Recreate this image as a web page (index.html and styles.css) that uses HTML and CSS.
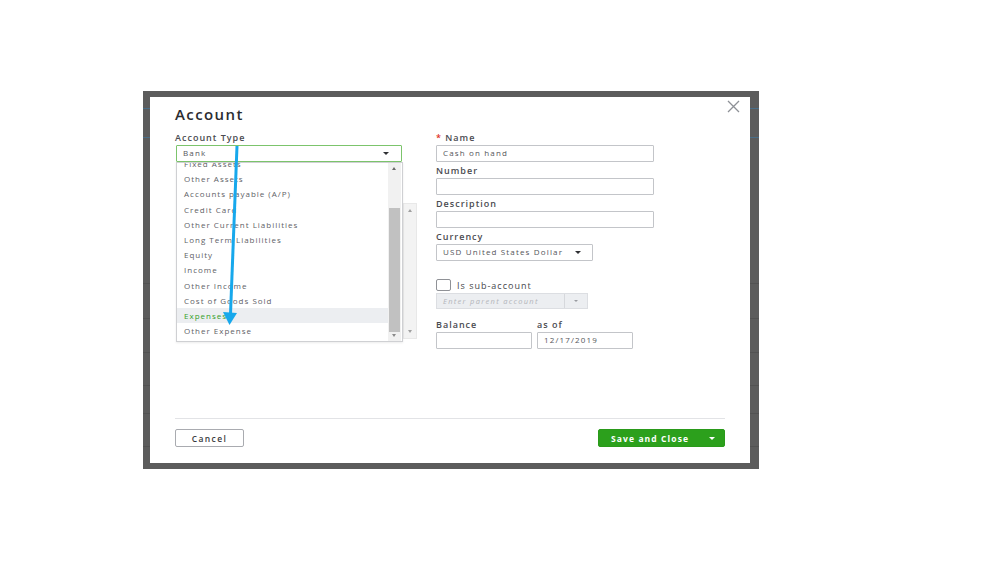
FILE: index.html
```html
<!DOCTYPE html>
<html lang="en">
<head>
<meta charset="utf-8">
<title>Account</title>
<link rel="stylesheet" href="styles.css">
</head>
<body>
<div class="frame">
  <div class="modal">
    <button class="close" aria-label="Close">
      <svg width="13" height="13" viewBox="0 0 13 13"><path d="M1 1L12 12M12 1L1 12" stroke="#8d9096" stroke-width="1.3" fill="none"/></svg>
    </button>
    <h1 class="title">Account</h1>
    <div class="cols">
      <div class="col-left">
        <div class="lbl">Account Type</div>
        <div class="select-wrap">
          <div class="select active"><span>Bank</span><span class="caret"></span></div>
          <div class="ghost-scroll"><span class="sb-up"></span><span class="sb-down"></span></div>
          <div class="menu">
            <ul class="items">
              <li>Fixed Assets</li>
              <li>Other Assets</li>
              <li>Accounts payable (A/P)</li>
              <li>Credit Card</li>
              <li>Other Current Liabilities</li>
              <li>Long Term Liabilities</li>
              <li>Equity</li>
              <li>Income</li>
              <li>Other Income</li>
              <li>Cost of Goods Sold</li>
              <li class="hl">Expenses</li>
              <li>Other Expense</li>
            </ul>
            <div class="scrollbar"><span class="sb-up"></span><span class="thumb"></span><span class="sb-down"></span></div>
          </div>
        </div>
      </div>
      <div class="col-right">
        <div class="lbl"><span class="req">*</span> Name</div>
        <div class="input">Cash on hand</div>
        <div class="lbl">Number</div>
        <div class="input"></div>
        <div class="lbl">Description</div>
        <div class="input"></div>
        <div class="lbl">Currency</div>
        <div class="select currency"><span>USD United States Dollar</span><span class="caret"></span></div>
        <div class="check-row"><span class="checkbox"></span><span>Is sub-account</span></div>
        <div class="parent"><span class="ph">Enter parent account</span><span class="parent-btn"><span class="caret light"></span></span></div>
        <div class="bal-row">
          <div class="bal-col">
            <div class="lbl">Balance</div>
            <div class="input small"></div>
          </div>
          <div class="bal-col">
            <div class="lbl">as of</div>
            <div class="input small">12/17/2019</div>
          </div>
        </div>
      </div>
    </div>
    <div class="footer">
      <button class="btn-cancel">Cancel</button>
      <button class="btn-save"><span class="save-text">Save and Close</span><span class="caret white"></span></button>
    </div>
  </div>
</div>
<svg class="annot" width="999" height="562" viewBox="0 0 999 562">
  <line x1="237" y1="146" x2="230.5" y2="314" stroke="#17a8ec" stroke-width="3"/>
  <polygon points="223,312 237,313 229.5,325" fill="#17a8ec"/>
</svg>
</body>
</html>
```

FILE: styles.css
```css
html, body {
  margin: 0;
  background: #ffffff;
}
body {
  position: relative;
  font-family: "Open Sans", "Liberation Sans", sans-serif;
  color: #393a3d;
  width: 999px;
  height: 562px;
  overflow: hidden;
}
.frame {
  margin: 91px 0 0 143px;
  width: 616px;
  height: 378px;
  box-sizing: border-box;
  padding: 6px 9px 6px 7px;
  background:
    linear-gradient(#4a6e88, #4a6e88) 0 17px / 100% 1px no-repeat,
    linear-gradient(#4a6e88, #4a6e88) 0 46px / 100% 1px no-repeat,
    linear-gradient(#525252, #525252) 0 192px / 100% 1px no-repeat,
    linear-gradient(#525252, #525252) 0 227px / 100% 1px no-repeat,
    linear-gradient(#525252, #525252) 0 261px / 100% 1px no-repeat,
    linear-gradient(#525252, #525252) 0 294px / 100% 1px no-repeat,
    linear-gradient(#525252, #525252) 0 322px / 100% 1px no-repeat,
    linear-gradient(#525252, #525252) 0 355px / 100% 1px no-repeat,
    #5c5c5c;
}
.modal {
  position: relative;
  width: 600px;
  height: 366px;
  box-sizing: border-box;
  background: #fff;
  padding: 8px 25px 0 25px;
  display: flex;
  flex-direction: column;
}
.close {
  position: absolute;
  top: 3px;
  right: 10px;
  width: 13px;
  height: 13px;
  padding: 0;
  border: 0;
  background: none;
  display: flex;
}
.title {
  margin: 0 0 9px 0;
  font-size: 15px;
  line-height: 18px;
  font-weight: 600;
  color: #2b2c30;
  letter-spacing: 1.4px;
}
.cols {
  display: flex;
  gap: 34px;
}
.col-left {
  width: 227px;
}
.col-right {
  width: 218px;
  display: flex;
  flex-direction: column;
  align-items: flex-start;
}
.lbl {
  font-size: 9px;
  line-height: 12px;
  font-weight: 600;
  color: #4a4b50;
  margin-bottom: 1px;
  letter-spacing: 1px;
}
.req {
  color: #e0301e;
}
.input, .select {
  box-sizing: border-box;
  height: 17px;
  border: 1px solid #c3c5c9;
  border-radius: 1px;
  background: #fff;
  font-size: 8px;
  line-height: 13px;
  padding: 0 6px 2px;
  color: #54555a;
  letter-spacing: 1.15px;
  white-space: nowrap;
}
.col-right > .input {
  width: 218px;
  margin-bottom: 3px;
}
.select {
  display: flex;
  align-items: center;
  justify-content: space-between;
}
.select .caret {
  margin-top: 2px;
}
.select.active {
  margin-left: 1px;
  width: 226px;
  border-color: #7cc46c;
  padding-right: 12px;
}
.select.currency {
  width: 157px;
  padding-right: 11px;
}
.caret {
  width: 0;
  height: 0;
  border-left: 3px solid transparent;
  border-right: 3px solid transparent;
  border-top: 3px solid #2f3034;
}
.caret.light {
  border-top-color: #9a9ca1;
  border-left-width: 2.5px;
  border-right-width: 2.5px;
  border-top-width: 2.5px;
}
.caret.white {
  border-top-color: #fff;
}
.select-wrap {
  position: relative;
}
.menu {
  position: absolute;
  top: 17px;
  left: 1px;
  width: 227px;
  height: 180px;
  box-sizing: border-box;
  border: 1px solid #cfd0d3;
  background: #fff;
  overflow: hidden;
  box-shadow: 0 1px 2px rgba(0,0,0,0.08);
  z-index: 2;
}
.items {
  list-style: none;
  margin: -7px 0 0 0;
  padding: 0;
  width: 211px;
}
.items li {
  height: 15.2px;
  line-height: 15.2px;
  padding-left: 7px;
  font-size: 8px;
  color: #606166;
  letter-spacing: 1px;
  white-space: nowrap;
}
.items li.hl {
  background: #eceef1;
  color: #35a02a;
}
.scrollbar {
  position: absolute;
  top: 0;
  right: 1px;
  bottom: 0;
  width: 13px;
  background: #f1f1f1;
}
.thumb {
  position: absolute;
  left: 1px;
  right: 1px;
  top: 45px;
  height: 124px;
  background: #c1c1c1;
}
.sb-up, .sb-down {
  position: absolute;
  left: 50%;
  margin-left: -2.5px;
  width: 0;
  height: 0;
  border-left: 2.5px solid transparent;
  border-right: 2.5px solid transparent;
}
.sb-up {
  top: 4px;
  border-bottom: 3px solid #6a6a6a;
}
.sb-down {
  bottom: 4px;
  border-top: 3px solid #8a8a8a;
}
.ghost-scroll {
  position: absolute;
  left: 228px;
  top: 58px;
  width: 14px;
  height: 136px;
  box-sizing: border-box;
  background: #f3f3f3;
  border: 1px solid #e8e8e8;
  z-index: 1;
}
.ghost-scroll .sb-up { border-bottom-color: #a0a0a0; top: 5px; }
.ghost-scroll .sb-down { border-top-color: #a0a0a0; bottom: 5px; }
.check-row {
  margin-top: 18px;
  height: 12px;
  display: flex;
  align-items: center;
  gap: 6px;
  font-size: 9px;
  line-height: 11px;
  color: #45464b;
  letter-spacing: 1px;
}
.checkbox {
  width: 15px;
  height: 12px;
  box-sizing: border-box;
  border: 1px solid #8f9196;
  border-radius: 2px;
  background: #fff;
}
.parent {
  margin-top: 2px;
  width: 152px;
  height: 16px;
  box-sizing: border-box;
  border: 1px solid #dcdee2;
  background: #eceef1;
  display: flex;
  align-items: center;
}
.ph {
  flex: 1;
  padding-left: 6px;
  font-size: 7.5px;
  line-height: 12px;
  padding-bottom: 1px;
  font-style: italic;
  color: #b3b5ba;
  letter-spacing: 1.3px;
  white-space: nowrap;
  overflow: hidden;
}
.parent-btn {
  width: 22px;
  height: 100%;
  border-left: 1px solid #d6d8dc;
  display: flex;
  align-items: center;
  justify-content: center;
}
.bal-row {
  margin-top: 10px;
  display: flex;
  gap: 5px;
}
.input.small {
  width: 96px;
  padding-left: 6px;
}
.footer {
  margin-top: auto;
  border-top: 1px solid #e2e3e6;
  padding: 10px 0 16px;
  display: flex;
  justify-content: space-between;
  align-items: center;
}
.btn-cancel, .btn-save {
  font-family: "Open Sans", "Liberation Sans", sans-serif;
  height: 18px;
  box-sizing: border-box;
  font-size: 8.5px;
  font-weight: 600;
  border-radius: 2px;
  padding: 0;
}
.btn-cancel {
  width: 69px;
  background: #fff;
  border: 1px solid #a9abb0;
  color: #393a3d;
  letter-spacing: 1.35px;
}
.btn-save {
  width: 127px;
  background: #2ca01c;
  border: 1px solid #2a9a1a;
  color: #fff;
  font-weight: 700;
  display: flex;
  align-items: center;
  padding: 0 9px 0 12px;
  letter-spacing: 1.1px;
}
.save-text {
  flex: 1;
  text-align: left;
}
.annot {
  position: absolute;
  top: 0;
  left: 0;
  pointer-events: none;
  z-index: 5;
}
```
